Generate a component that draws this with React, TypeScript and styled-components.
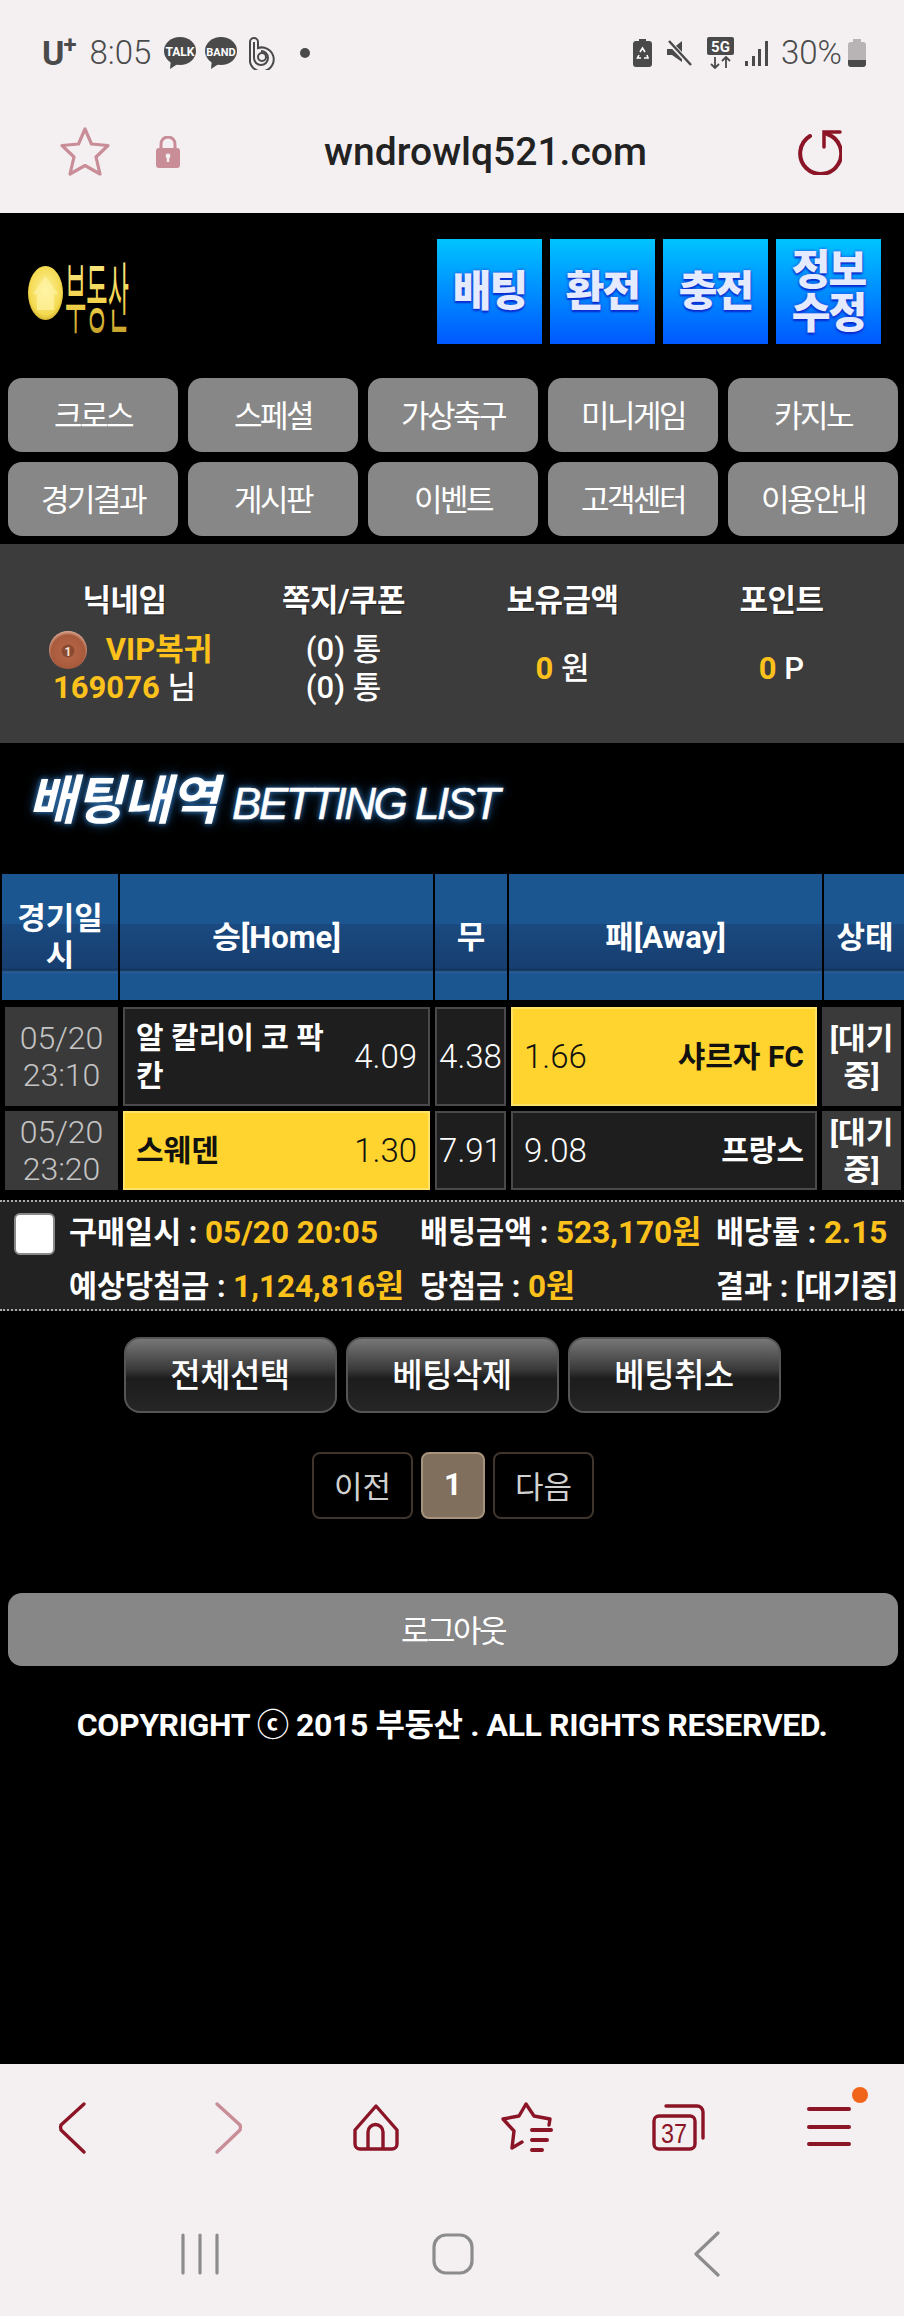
import React from "react";
import styled, { createGlobalStyle } from "styled-components";

const Global = createGlobalStyle`
  html, body { margin: 0; padding: 0; background: #000; }
  * { box-sizing: border-box; }
  body { font-family: Roboto, "Noto Sans CJK KR", sans-serif; }
`;

const CHROME = "#f4f0f2";
const WINE = "#8b1526";
const PALE = "#c98d98";
const YELLOW = "#fcc21b";
const GREY = "#4a4a4a";

const Page = styled.div`
  width: 904px;
  height: 2316px;
  display: flex;
  flex-direction: column;
  background: #000;
  overflow: hidden;
`;
const TopChrome = styled.header`
  height: 213px;
  flex: none;
  background: ${CHROME};
`;
const StatusBar = styled.div`
  height: 106px;
  padding: 0 38px 0 42px;
  display: flex;
  align-items: center;
  justify-content: space-between;
  color: ${GREY};
`;
const StatusGroup = styled.div`
  display: flex;
  align-items: center;
`;
const Carrier = styled.span`
  font-size: 34px;
  font-weight: 700;
  line-height: 36px;
  display: flex;
  align-items: flex-start;
  margin-right: 14px;
  letter-spacing: -1px;
  & > sup {
    font-size: 24px;
    line-height: 20px;
    margin: 0;
  }
`;
const StatusText = styled.span<{ $gap?: number }>`
  font-size: 33px;
  font-weight: 300;
  line-height: 36px;
  margin-right: ${(p) => p.$gap ?? 0}px;
`;
const StatusIcon = styled.svg<{ $gap?: number }>`
  display: block;
  flex: none;
  margin-right: ${(p) => p.$gap ?? 0}px;
`;
const AddressBar = styled.div`
  height: 107px;
  padding: 0 62px 15px 60px;
  display: flex;
  align-items: center;
`;
const Url = styled.div`
  flex: 1;
  text-align: center;
  padding-right: 6px;
  font-size: 39px;
  font-weight: 500;
  color: #222;
`;
const LockIcon = styled.svg`
  margin-left: 46px;
  display: block;
`;

const Main = styled.main`
  flex: 1;
  background: #000;
  min-height: 0;
`;
const Header = styled.div`
  display: flex;
  align-items: flex-start;
  justify-content: space-between;
  padding: 26px 23px 34px 28px;
`;
const Logo = styled.svg`
  display: block;
  margin-top: 19px;
  overflow: visible;
`;
const TopButtons = styled.div`
  display: flex;
  gap: 8px;
`;
const TopButton = styled.div`
  width: 105px;
  height: 105px;
  display: flex;
  align-items: center;
  justify-content: center;
  text-align: center;
  background: linear-gradient(#00c4ff, #0058ff);
  color: #e4ebff;
  font-size: 42px;
  line-height: 43px;
  font-weight: 900;
  letter-spacing: -2px;
  text-shadow: 0 0 3px #0a2bd0, 0 2px 2px #0a2bd0, 0 0 1px #fff;
`;
const Nav = styled.nav`
  display: grid;
  grid-template-columns: repeat(5, 170px);
  grid-auto-rows: 74px;
  gap: 10px;
  padding: 0 6px 0 8px;
`;
const NavButton = styled.a`
  background: #878787;
  border-radius: 14px;
  padding-bottom: 3px;
  display: flex;
  align-items: center;
  justify-content: center;
  color: #fff;
  font-size: 31px;
  letter-spacing: -2.5px;
  font-weight: 400;
`;
const InfoPanel = styled.section`
  margin-top: 8px;
  height: 199px;
  background: #3c3c3c;
  padding: 33px 14px 0 15px;
  display: grid;
  grid-template-columns: repeat(4, 219px);
  grid-template-rows: 40px 76px;
  row-gap: 14px;
  justify-items: center;
  align-items: center;
  color: #fff;
  font-size: 31px;
  font-weight: 700;
`;
const InfoHead = styled.div`
  font-weight: 700;
  text-shadow: 1px 1px 1px #222;
  letter-spacing: -0.5px;
`;
const InfoValue = styled.div`
  line-height: 38px;
  text-align: center;
  font-weight: 500;
  white-space: nowrap;
`;
const InfoLine = styled.div<{ $shift?: number }>`
  display: flex;
  align-items: center;
  justify-content: center;
  gap: 19px;
  height: 38px;
  margin-left: ${(p) => p.$shift ?? 0}px;
`;
const Gold = styled.span`
  color: ${YELLOW};
  font-weight: 700;
`;
const SlipGold = styled(Gold)`
  font-size: 31.5px;
`;
const TitleBlock = styled.div`
  height: 131px;
  padding: 26px 0 0 28px;
  display: flex;
  align-items: baseline;
  gap: 15px;
  color: #fff;
  font-style: italic;
  text-shadow: 0 0 5px #3a7fc0, 0 0 12px #1f5a94;
`;
const TitleKo = styled.span`
  font-size: 53px;
  line-height: 64px;
  font-weight: 700;
  letter-spacing: -1.5px;
`;
const TitleEn = styled.span`
  font-family: "Liberation Sans", sans-serif;
  font-size: 44px;
  letter-spacing: -2.5px;
  -webkit-text-stroke: 0.5px #fff;
`;
const TableHead = styled.div`
  height: 126px;
  padding-left: 2px;
  display: grid;
  grid-template-columns: 116px 313px 72px 313px 82px;
  column-gap: 2px;
`;
const HeadCell = styled.div`
  display: flex;
  align-items: center;
  justify-content: center;
  text-align: center;
  color: #fff;
  font-size: 31px;
  line-height: 37px;
  font-weight: 700;
  padding: 0 12px;
  background: linear-gradient(
    #1c5690 0,
    #1c5690 50px,
    #1a4a80 50px,
    #173e70 94px,
    #123258 96px,
    #2a5f98 98px,
    #1c5690 100px
  );
`;
const Row = styled.div<{ $h: number }>`
  height: ${(p) => p.$h}px;
  padding-left: 5px;
  margin-top: 5px;
  display: grid;
  grid-template-columns: 113px 307px 71px 306px 79px;
  column-gap: 5px;
`;
const RowFirst = styled(Row)`
  margin-top: 7px;
`;
const SideCell = styled.div<{ $strong?: boolean }>`
  background: #3a3a3a;
  display: flex;
  align-items: center;
  justify-content: center;
  text-align: center;
  line-height: 37px;
  color: ${(p) => (p.$strong ? "#fff" : "#c4c4c4")};
  font-size: ${(p) => (p.$strong ? 30 : 32)}px;
  font-weight: ${(p) => (p.$strong ? 700 : 300)};
`;
const Pick = styled.div<{ $on?: boolean }>`
  display: flex;
  align-items: center;
  justify-content: space-between;
  padding: 0 11px;
  background: ${(p) => (p.$on ? "#ffd42e" : "#1e1e1e")};
  border: 2px solid ${(p) => (p.$on ? "#ffe266" : "#4a4a4a")};
  color: ${(p) => (p.$on ? "#111" : "#fff")};
`;
const DrawCell = styled(Pick)`
  justify-content: center;
  padding: 0;
`;
const Team = styled.span`
  font-size: 30px;
  font-weight: 700;
  line-height: 38px;
  max-width: 205px;
`;
const Odds = styled.span`
  font-size: 33px;
  font-weight: 300;
`;
const Slip = styled.section`
  margin-top: 10px;
  height: 111px;
  background: #222;
  border-top: 2px dotted #aaa;
  border-bottom: 2px dotted #aaa;
  padding: 9px 0 0 14px;
  display: flex;
  align-items: flex-start;
`;
const Check = styled.input.attrs({ type: "checkbox" })`
  appearance: none;
  width: 41px;
  height: 42px;
  margin: 2px 14px 0 0;
  flex: none;
  background: #fff;
  border: 2px solid #8a8a8a;
  border-radius: 6px;
`;
const SlipGrid = styled.div`
  display: grid;
  grid-template-columns: 351px 296px 1fr;
  grid-auto-rows: 44px;
  row-gap: 10px;
  color: #fff;
  font-size: 30.5px;
  font-weight: 700;
  line-height: 44px;
  white-space: nowrap;
`;
const ActionRow = styled.div`
  margin-top: 26px;
  display: flex;
  justify-content: center;
  gap: 9px;
`;
const ActionButton = styled.button`
  width: 213px;
  height: 76px;
  border: 2px solid #555;
  border-radius: 16px;
  background: linear-gradient(#777 0, #3a3a3a 42%, #1c1c1c 55%, #262626 100%);
  color: #fff;
  font-family: inherit;
  font-size: 33px;
  font-weight: 500;
  letter-spacing: -0.5px;
  padding: 0 0 5px;
`;
const Pager = styled.div`
  margin-top: 39px;
  padding-left: 2px;
  display: flex;
  justify-content: center;
  gap: 8px;
`;
const PageButton = styled.div<{ $on?: boolean }>`
  width: ${(p) => (p.$on ? 64 : 101)}px;
  height: 67px;
  border-radius: 8px;
  padding-bottom: 2px;
  display: flex;
  align-items: center;
  justify-content: center;
  border: 2px solid ${(p) => (p.$on ? "#a5937e" : "#3f352c")};
  background: ${(p) => (p.$on ? "#806f5c" : "#000")};
  color: ${(p) => (p.$on ? "#fff" : "#d0d0d0")};
  font-size: 31px;
  font-weight: ${(p) => (p.$on ? 700 : 400)};
`;
const Logout = styled.div`
  margin: 74px 6px 0 8px;
  height: 73px;
  padding-bottom: 3px;
  background: #878787;
  border-radius: 14px;
  display: flex;
  align-items: center;
  justify-content: center;
  color: #fff;
  font-size: 31px;
  letter-spacing: -2.5px;
  font-weight: 400;
`;
const Copyright = styled.p`
  margin: 41px 0 0;
  text-align: center;
  color: #fff;
  font-size: 32px;
  line-height: 36px;
  font-weight: 700;
  letter-spacing: -0.4px;
`;
const BottomChrome = styled.footer`
  height: 252px;
  flex: none;
  background: ${CHROME};
`;
const Toolbar = styled.div`
  height: 128px;
  display: grid;
  grid-template-columns: repeat(6, 1fr);
`;
const ToolCell = styled.div`
  position: relative;
  display: flex;
  align-items: center;
  justify-content: center;
`;
const Badge = styled.span`
  position: absolute;
  left: 99px;
  top: 23px;
  width: 16px;
  height: 16px;
  border-radius: 50%;
  background: #f0651a;
`;
const SystemNav = styled.div`
  height: 124px;
  padding: 0 70px 0 73px;
  display: grid;
  grid-template-columns: repeat(3, 1fr);
  align-items: center;
  justify-items: center;
`;

const Talk = ({ label, gap, size }: { label: string; gap: number; size: number }) => (
  <StatusIcon $gap={gap} width="32" height="32" viewBox="0 0 32 32">
    <ellipse cx="16" cy="14" rx="16" ry="14" fill={GREY} />
    <path d="M7 22 L6 32 L15 26 Z" fill={GREY} />
    <text x="16" y="18.500" textAnchor="middle" fontSize={size} fontWeight="700" fill="#fff" fontFamily="Roboto, sans-serif">
      {label}
    </text>
  </StatusIcon>
);

const rows = [
  { date: "05/20", time: "23:10", home: "알 칼리이 코 팍칸", h: "4.09", d: "4.38", a: "1.66", away: "샤르자 FC", pick: "away", height: 99 },
  { date: "05/20", time: "23:20", home: "스웨덴", h: "1.30", d: "7.91", a: "9.08", away: "프랑스", pick: "home", height: 79 },
];

export default function App() {
  return (
    <Page>
      <Global />
      <TopChrome>
        <StatusBar>
          <StatusGroup>
            <Carrier>
              U<sup>+</sup>
            </Carrier>
            <StatusText $gap={13}>8:05</StatusText>
            <Talk label="TALK" gap={9} size={12} />
            <Talk label="BAND" gap={11} size={11} />
            <StatusIcon $gap={25} width="27" height="34" viewBox="0 0 27 34" fill="none" stroke={GREY} strokeWidth="2">
              <path d="M2 6 a4 4 0 0 1 8 0 V12 a12 12 0 1 1 -8 14 Z" />
              <path d="M6 6 V22 a7 7 0 1 0 7 -7" />
              <circle cx="14" cy="21" r="4" />
            </StatusIcon>
            <StatusIcon width="10" height="10" viewBox="0 0 10 10">
              <circle cx="5" cy="5" r="5" fill={GREY} />
            </StatusIcon>
          </StatusGroup>
          <StatusGroup>
            <StatusIcon $gap={15} width="19" height="28" viewBox="0 0 19 28">
              <path d="M6 0 H13 V2 H16 a3 3 0 0 1 3 3 V25 a3 3 0 0 1 -3 3 H3 a3 3 0 0 1 -3 -3 V5 a3 3 0 0 1 3 -3 H6 Z" fill={GREY} />
              <path d="M7 13 L9.5 9 L12 13 M14 16 L15 19 H11 M8 19 H4.5 L6 16" stroke="#fff" strokeWidth="1.6" fill="none" />
            </StatusIcon>
            <StatusIcon $gap={15} width="25" height="26" viewBox="0 0 25 26">
              <path d="M0 9 H5 L15 1 V22 L5 15 H0 Z" fill={GREY} />
              <path d="M2 2 L24 25" stroke={CHROME} strokeWidth="5" />
              <path d="M2 1 L24 25" stroke={GREY} strokeWidth="2.5" />
            </StatusIcon>
            <StatusIcon $gap={11} width="27" height="32" viewBox="0 0 27 32">
              <rect width="27" height="18" rx="2" fill={GREY} />
              <text x="13.5" y="15" textAnchor="middle" fontSize="15" fontWeight="700" fill="#fff" fontFamily="Roboto, sans-serif">5G</text>
              <path d="M8 20 V31 M4 27 L8 31 L12 27 M19 31 V20 M15 24 L19 20 L23 24" stroke={GREY} strokeWidth="1.8" fill="none" />
            </StatusIcon>
            <StatusIcon $gap={13} width="23" height="25" viewBox="0 0 23 25" fill={GREY}>
              <rect x="0" y="20" width="3" height="5" />
              <rect x="7" y="15" width="3" height="10" />
              <rect x="13" y="8" width="3" height="17" />
              <rect x="20" y="0" width="3" height="25" />
            </StatusIcon>
            <StatusText $gap={6}>30%</StatusText>
            <StatusIcon width="18" height="28" viewBox="0 0 18 28">
              <path d="M5 0 H13 V3 H15 a3 3 0 0 1 3 3 V22 H0 V6 a3 3 0 0 1 3 -3 H5 Z" fill="#b8b4b5" />
              <path d="M0 21 H18 V25 a3 3 0 0 1 -3 3 H3 a3 3 0 0 1 -3 -3 Z" fill={GREY} />
            </StatusIcon>
          </StatusGroup>
        </StatusBar>
        <AddressBar>
          <svg width="50" height="50" viewBox="0 0 50 50" fill="none" stroke={PALE} strokeWidth="3.2" strokeLinejoin="round">
            <path d="M25 2 L31.5 17 L48 18.5 L36 30 L40 47 L25 38.5 L10 47 L14 30 L2 18.5 L18.5 17 Z" />
          </svg>
          <LockIcon width="24" height="32" viewBox="0 0 24 32">
            <path d="M5 13 V8 a7 7 0 0 1 14 0 V13" fill="none" stroke={PALE} strokeWidth="3" />
            <rect x="0" y="12" width="24" height="20" rx="3" fill={PALE} />
            <circle cx="12" cy="20" r="2.4" fill={CHROME} />
            <rect x="10.8" y="20" width="2.4" height="6" fill={CHROME} />
          </LockIcon>
          <Url>wndrowlq521.com</Url>
          <svg width="45" height="46" viewBox="0 0 45 46" fill="none" stroke={WINE} strokeWidth="4" strokeLinecap="round">
            <path d="M13 7 A20.5 20.5 0 1 0 30 5" />
            <path d="M27 18 V3 H43" strokeWidth="3.5" />
          </svg>
        </AddressBar>
      </TopChrome>
      <Main>
        <Header>
          <Logo width="102" height="74" viewBox="0 0 102 74">
            <defs>
              <linearGradient id="gold" x1="0" y1="0" x2="0" y2="1">
                <stop offset="0" stopColor="#fff2a0" />
                <stop offset="0.6" stopColor="#f2d24a" />
                <stop offset="1" stopColor="#b08a18" />
              </linearGradient>
              <radialGradient id="coin" cx="0.5" cy="0.45" r="0.6">
                <stop offset="0" stopColor="#fff2a0" />
                <stop offset="0.75" stopColor="#f4da50" />
                <stop offset="1" stopColor="#c9a524" />
              </radialGradient>
            </defs>
            <ellipse cx="17.5" cy="35" rx="17.5" ry="27" fill="url(#coin)" />
            <path d="M17.5 18 L30 36 H26 V52 H9 V36 H5 Z" fill="#fff4a8" opacity="0.65" />
            <text x="37" y="21.5" transform="scale(1 3.2)" textLength="64" lengthAdjust="spacingAndGlyphs" fontSize="24" fontWeight="400" fill="url(#gold)" fontFamily="'Noto Sans CJK KR', sans-serif">
              부동산
            </text>
          </Logo>
          <TopButtons>
            <TopButton>배팅</TopButton>
            <TopButton>환전</TopButton>
            <TopButton>충전</TopButton>
            <TopButton>
              정보
              <br />
              수정
            </TopButton>
          </TopButtons>
        </Header>
        <Nav>
          {["크로스", "스페셜", "가상축구", "미니게임", "카지노", "경기결과", "게시판", "이벤트", "고객센터", "이용안내"].map((t) => (
            <NavButton key={t}>{t}</NavButton>
          ))}
        </Nav>
        <InfoPanel>
          <InfoHead>닉네임</InfoHead>
          <InfoHead>쪽지/쿠폰</InfoHead>
          <InfoHead>보유금액</InfoHead>
          <InfoHead>포인트</InfoHead>
          <InfoValue>
            <InfoLine $shift={12}>
              <svg width="38" height="38" viewBox="0 0 38 38">
                <defs>
                  <radialGradient id="medal" cx="0.5" cy="0.55" r="0.55">
                    <stop offset="0" stopColor="#b9694a" />
                    <stop offset="0.8" stopColor="#a85a3c" />
                    <stop offset="1" stopColor="#e0b09a" />
                  </radialGradient>
                </defs>
                <circle cx="19" cy="19" r="19" fill="url(#medal)" />
                <circle cx="19" cy="20" r="6.5" fill="#8a4a30" />
                <text x="19" y="24.5" textAnchor="middle" fontSize="12" fontWeight="700" fill="#f3e4d8" fontFamily="Roboto, sans-serif">1</text>
              </svg>
              <Gold>VIP복귀</Gold>
            </InfoLine>
            <div>
              <Gold>169076</Gold> 님
            </div>
          </InfoValue>
          <InfoValue>
            <div>(0) 통</div>
            <div>(0) 통</div>
          </InfoValue>
          <InfoValue>
            <Gold>0</Gold> 원
          </InfoValue>
          <InfoValue>
            <Gold>0</Gold> P
          </InfoValue>
        </InfoPanel>
        <TitleBlock>
          <TitleKo>배팅내역</TitleKo>
          <TitleEn>BETTING LIST</TitleEn>
        </TitleBlock>
        <TableHead>
          <HeadCell>경기일시</HeadCell>
          <HeadCell>승[Home]</HeadCell>
          <HeadCell>무</HeadCell>
          <HeadCell>패[Away]</HeadCell>
          <HeadCell>상태</HeadCell>
        </TableHead>
        {rows.map((r, i) => {
          const R = i === 0 ? RowFirst : Row;
          return (
            <R key={r.time} $h={r.height}>
              <SideCell>
                {r.date}
                <br />
                {r.time}
              </SideCell>
              <Pick $on={r.pick === "home"}>
                <Team>{r.home}</Team>
                <Odds>{r.h}</Odds>
              </Pick>
              <DrawCell>
                <Odds>{r.d}</Odds>
              </DrawCell>
              <Pick $on={r.pick === "away"}>
                <Odds>{r.a}</Odds>
                <Team>{r.away}</Team>
              </Pick>
              <SideCell $strong>[대기중]</SideCell>
            </R>
          );
        })}
        <Slip>
          <Check />
          <SlipGrid>
            <div>
              구매일시 : <SlipGold>05/20 20:05</SlipGold>
            </div>
            <div>
              배팅금액 : <SlipGold>523,170원</SlipGold>
            </div>
            <div>
              배당률 : <SlipGold>2.15</SlipGold>
            </div>
            <div>
              예상당첨금 : <SlipGold>1,124,816원</SlipGold>
            </div>
            <div>
              당첨금 : <SlipGold>0원</SlipGold>
            </div>
            <div>결과 : [대기중]</div>
          </SlipGrid>
        </Slip>
        <ActionRow>
          <ActionButton>전체선택</ActionButton>
          <ActionButton>베팅삭제</ActionButton>
          <ActionButton>베팅취소</ActionButton>
        </ActionRow>
        <Pager>
          <PageButton>이전</PageButton>
          <PageButton $on>1</PageButton>
          <PageButton>다음</PageButton>
        </Pager>
        <Logout>로그아웃</Logout>
        <Copyright>COPYRIGHT ⓒ 2015 부동산 . ALL RIGHTS RESERVED.</Copyright>
      </Main>
      <BottomChrome>
        <Toolbar>
          <ToolCell>
            <svg width="60" height="60" viewBox="0 0 60 60" fill="none" stroke={WINE} strokeWidth="3.4" strokeLinecap="round" strokeLinejoin="round">
              <path d="M39 6 L16 27 Q15 29.500 16 32 L39 54" />
            </svg>
          </ToolCell>
          <ToolCell>
            <svg width="60" height="60" viewBox="0 0 60 60" fill="none" stroke={PALE} strokeWidth="3.4" strokeLinecap="round" strokeLinejoin="round">
              <path d="M21 6 L44 27 Q45 29.500 44 32 L21 54" />
            </svg>
          </ToolCell>
          <ToolCell>
            <svg width="60" height="60" viewBox="0 0 60 60" fill="none" stroke={WINE} strokeWidth="3.4" strokeLinejoin="round">
              <path d="M29 8 L8 32 V46 a5 5 0 0 0 5 5 H45 a5 5 0 0 0 5 -5 V32 Z" />
              <path d="M21 51 V34 a7.500 7.500 0 0 1 15 0 V51" />
            </svg>
          </ToolCell>
          <ToolCell>
            <svg width="60" height="60" viewBox="0 0 60 60" fill="none" stroke={WINE} strokeWidth="3.4" strokeLinecap="round" strokeLinejoin="round">
              <path d="M52 27 L53 21 L37 18 L29 6 L22 18 L6 21 L17 33 L15 50 L25 44" />
              <path d="M35 32 H54 M35 42 H50 M35 52 H45" strokeWidth="4" />
            </svg>
          </ToolCell>
          <ToolCell>
            <svg width="60" height="60" viewBox="0 0 60 60" fill="none" stroke={WINE} strokeWidth="3.4" strokeLinecap="round">
              <path d="M18 8 H49 a6 6 0 0 1 6 6 V40" />
              <rect x="6" y="18" width="41" height="33" rx="5" />
              <text x="26" y="45" textAnchor="middle" fontSize="28" fill={WINE} stroke="none" fontFamily="'Liberation Sans', sans-serif" textLength="26" lengthAdjust="spacingAndGlyphs">
                37
              </text>
            </svg>
          </ToolCell>
          <ToolCell>
            <svg width="60" height="60" viewBox="0 0 60 60" fill="none" stroke={WINE} strokeWidth="4" strokeLinecap="round">
              <path d="M10 11 H50 M10 29 H50 M10 46 H50" />
            </svg>
            <Badge />
          </ToolCell>
        </Toolbar>
        <SystemNav>
          <svg width="40" height="42" viewBox="0 0 40 42" stroke="#8c8c8c" strokeWidth="3.2" strokeLinecap="round">
            <path d="M3 2 V40 M20 2 V40 M37 2 V40" />
          </svg>
          <svg width="42" height="42" viewBox="0 0 42 42" fill="none" stroke="#8c8c8c" strokeWidth="3.2">
            <rect x="2" y="2" width="38" height="38" rx="12" />
          </svg>
          <svg width="28" height="46" viewBox="0 0 28 46" fill="none" stroke="#8c8c8c" strokeWidth="3.2" strokeLinecap="round" strokeLinejoin="round">
            <path d="M25 2 L3 23 L25 44" />
          </svg>
        </SystemNav>
      </BottomChrome>
    </Page>
  );
}
